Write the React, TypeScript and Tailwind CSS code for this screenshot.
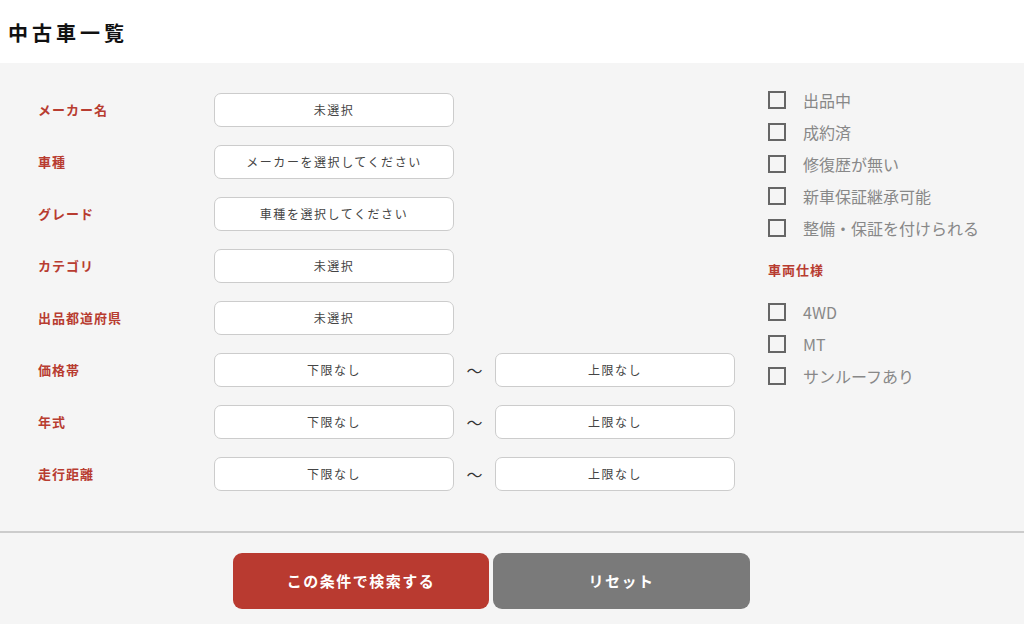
import React from "react";

const FONT = '"Noto Sans CJK JP", "Noto Sans", sans-serif';

const rows: { label: string; left: string; right?: string }[] = [
  { label: "メーカー名", left: "未選択" },
  { label: "車種", left: "メーカーを選択してください" },
  { label: "グレード", left: "車種を選択してください" },
  { label: "カテゴリ", left: "未選択" },
  { label: "出品都道府県", left: "未選択" },
  { label: "価格帯", left: "下限なし", right: "上限なし" },
  { label: "年式", left: "下限なし", right: "上限なし" },
  { label: "走行距離", left: "下限なし", right: "上限なし" },
];

function Box({ text }: { text: string }) {
  return (
    <div className="w-[240px] h-[34px] bg-white border border-[#cccccc] rounded-[7px] flex items-center justify-center text-[12px] tracking-[0.13em] text-[#444444]">
      {text}
    </div>
  );
}

function Check({ text }: { text: string }) {
  return (
    <div className="h-[32px] flex items-center">
      <div className="w-[18px] h-[18px] border-2 border-[#666666] bg-[#f5f5f5]" />
      <span className="ml-[17px] text-[16px] text-[#888888] leading-none">{text}</span>
    </div>
  );
}

export default function App() {
  return (
    <div className="w-[1024px] h-[624px] bg-[#f5f5f5] flex flex-col overflow-hidden" style={{ fontFamily: FONT }}>
      <header className="h-[63px] bg-white flex items-center pl-[8px] pt-[2px]">
        <h1 className="text-[20px] font-bold tracking-[4px] text-[#111111]">中古車一覧</h1>
      </header>
      <div className="flex h-[470px] border-b-2 border-[#cccccc]">
        <div className="pt-[30px] pl-[38px] flex flex-col gap-[18px]">
          {rows.map((r) => (
            <div key={r.label} className="flex items-center h-[34px]">
              <div className="w-[176px] text-[13px] font-bold tracking-[1px] text-[#b83c30]">{r.label}</div>
              <Box text={r.left} />
              {r.right && (
                <>
                  <div className="w-[41px] text-center text-[16px] text-[#333333]">〜</div>
                  <Box text={r.right} />
                </>
              )}
            </div>
          ))}
        </div>
        <div className="ml-[33px] pt-[21px] flex flex-col">
          <Check text="出品中" />
          <Check text="成約済" />
          <Check text="修復歴が無い" />
          <Check text="新車保証継承可能" />
          <Check text="整備・保証を付けられる" />
          <div className="h-[52px] flex items-center text-[13px] font-bold tracking-[1px] text-[#b83c30]">車両仕様</div>
          <Check text="4WD" />
          <Check text="MT" />
          <Check text="サンルーフあり" />
        </div>
      </div>
      <div className="flex gap-[4px] pt-[20px] pl-[233px]">
        <button className="w-[256px] h-[56px] rounded-[9px] bg-[#b93a30] text-white text-[15px] font-bold tracking-[1.5px]">
          この条件で検索する
        </button>
        <button className="w-[257px] h-[56px] rounded-[9px] bg-[#7a7a7a] text-white text-[15px] font-bold tracking-[1.5px]">
          リセット
        </button>
      </div>
    </div>
  );
}
